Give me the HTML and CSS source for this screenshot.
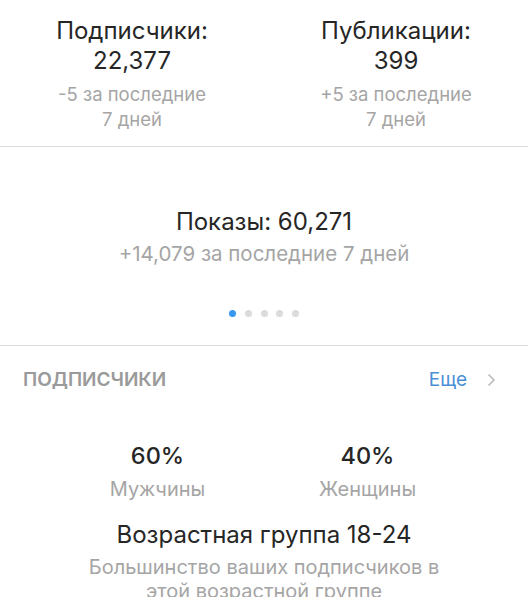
FILE: index.html
```html
<!DOCTYPE html>
<html lang="ru">
<head>
    <meta charset="UTF-8">
    <meta name="viewport" content="width=device-width, initial-scale=1.0">
    <title>Статистика</title>
    <link rel="stylesheet" href="styles.css">
</head>
<body>

    <div class="stats">
        <div class="stat">
            <div class="stat-title">Подписчики:</div>
            <div class="stat-value">22,377</div>
            <div class="stat-change">-5 за последние<br>7 дней</div>
        </div>
        <div class="stat">
            <div class="stat-title">Публикации:</div>
            <div class="stat-value">399</div>
            <div class="stat-change">+5 за последние<br>7 дней</div>
        </div>
    </div>

    <div class="slider">
        <div class="slide-title">Показы: 60,271</div>
        <div class="slide-change">+14,079 за последние 7 дней</div>
        <div class="dots">
            <span class="dot active"></span>
            <span class="dot"></span>
            <span class="dot"></span>
            <span class="dot"></span>
            <span class="dot"></span>
        </div>
    </div>

    <div class="section-head">
        <span class="section-title">Подписчики</span>
        <a class="more" href="#">Еще <span class="chevron">
            <svg width="9" height="14" viewBox="0 0 9 14"><path d="M1.5 1.5 L7 7 L1.5 12.5" fill="none" stroke="#b8b8b8" stroke-width="1.5"/></svg>
        </span></a>
    </div>

    <div class="gender">
        <div class="gender-item">
            <div class="gender-value">60%</div>
            <div class="gender-label">Мужчины</div>
        </div>
        <div class="gender-item">
            <div class="gender-value">40%</div>
            <div class="gender-label">Женщины</div>
        </div>
    </div>

    <div class="age">
        <div class="age-title">Возрастная группа 18-24</div>
        <div class="age-text">Большинство ваших подписчиков в<br>этой возрастной группе</div>
    </div>

</body>
</html>
```

FILE: styles.css
```css
body {
    margin: 0;
    background-color: #fff;
    font-family: Inter, "Liberation Sans", sans-serif;
    color: #262626;
    overflow: hidden;
}
.stats {
    display: flex;
    padding: 16px 0 15px;
    border-bottom: 1px solid #dbdbdb;
}
.stat {
    flex: 1;
    text-align: center;
}
.stat-title,
.stat-value {
    font-size: 24px;
    line-height: 30px;
}
.stat-change {
    font-size: 18.5px;
    line-height: 24.5px;
    color: #a5a5a5;
    margin-top: 6px;
}
.slider {
    text-align: center;
    padding: 60px 0 28px;
    border-bottom: 1px solid #dbdbdb;
}
.slide-title {
    font-size: 24px;
    line-height: 30px;
}
.slide-change {
    font-size: 20.5px;
    line-height: 26px;
    color: #a5a5a5;
    margin-top: 4px;
}
.dots {
    display: flex;
    justify-content: center;
    gap: 8.6px;
    margin-top: 42.6px;
}
.dot {
    width: 7px;
    height: 7px;
    border-radius: 50%;
    background-color: #dbdbdb;
}
.dot.active {
    background-color: #3897f0;
}
.section-head {
    display: flex;
    justify-content: space-between;
    align-items: center;
    padding: 22px 32px 0 23px;
    line-height: 24px;
}
.section-title {
    text-transform: uppercase;
    font-size: 19px;
    font-weight: 600;
    color: #9a9a9a;
}
.more {
    display: flex;
    align-items: center;
    gap: 20px;
    color: #4a8fd6;
    text-decoration: none;
    font-size: 19px;
}
.chevron {
    display: flex;
}
.gender {
    display: flex;
    justify-content: center;
    margin-top: 49px;
    padding-right: 3px;
}
.gender-item {
    width: 210px;
    text-align: center;
}
.gender-value {
    font-size: 23.5px;
    font-weight: 500;
    line-height: 30px;
}
.gender-label {
    font-size: 20px;
    line-height: 26px;
    color: #a5a5a5;
    margin-top: 5px;
}
.age {
    text-align: center;
    margin-top: 18px;
}
.age-title {
    font-size: 24px;
    line-height: 30px;
}
.age-text {
    font-size: 20px;
    line-height: 24px;
    color: #a5a5a5;
    margin-top: 5px;
}
```
